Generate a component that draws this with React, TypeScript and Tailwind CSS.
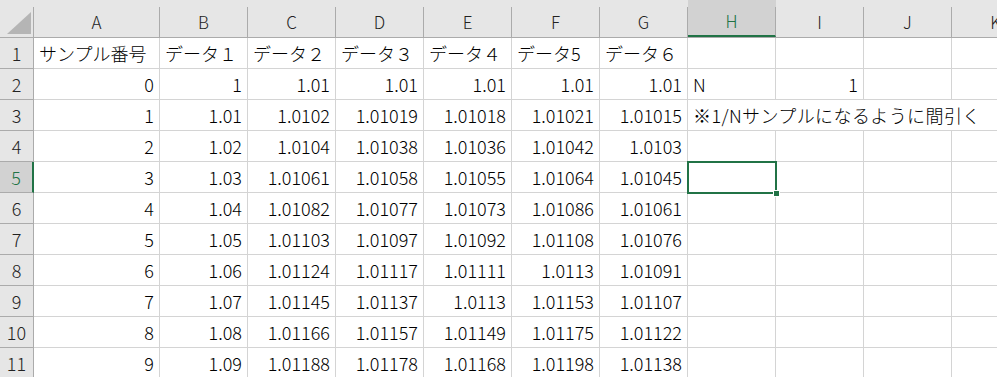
import React from 'react';

const cols = ['A', 'B', 'C', 'D', 'E', 'F', 'G', 'H', 'I', 'J', 'K'];
const widths = ['w-[126px]', 'w-[88px]', 'w-[88px]', 'w-[88px]', 'w-[88px]', 'w-[88px]', 'w-[88px]', 'w-[88px]', 'w-[88px]', 'w-[88px]', 'w-[88px]'];

type Cell = { v: string; left?: boolean };

const head = ['サンプル番号', 'データ１', 'データ２', 'データ３', 'データ４', 'データ5', 'データ６'];

const data: string[][] = [
  ['0', '1', '1.01', '1.01', '1.01', '1.01', '1.01'],
  ['1', '1.01', '1.0102', '1.01019', '1.01018', '1.01021', '1.01015'],
  ['2', '1.02', '1.0104', '1.01038', '1.01036', '1.01042', '1.0103'],
  ['3', '1.03', '1.01061', '1.01058', '1.01055', '1.01064', '1.01045'],
  ['4', '1.04', '1.01082', '1.01077', '1.01073', '1.01086', '1.01061'],
  ['5', '1.05', '1.01103', '1.01097', '1.01092', '1.01108', '1.01076'],
  ['6', '1.06', '1.01124', '1.01117', '1.01111', '1.0113', '1.01091'],
  ['7', '1.07', '1.01145', '1.01137', '1.0113', '1.01153', '1.01107'],
  ['8', '1.08', '1.01166', '1.01157', '1.01149', '1.01175', '1.01122'],
  ['9', '1.09', '1.01188', '1.01178', '1.01168', '1.01198', '1.01138'],
];

function buildRow(r: number): Cell[] {
  if (r === 1) return [...head.map((v) => ({ v, left: true })), { v: '' }, { v: '' }, { v: '' }, { v: '' }];
  const base: Cell[] = data[r - 2].map((v) => ({ v }));
  if (r === 2) return [...base, { v: 'N', left: true }, { v: '1' }, { v: '' }, { v: '' }];
  return [...base, { v: '' }, { v: '' }, { v: '' }, { v: '' }];
}

function RowHeader({ n }: { n: number }) {
  const sel = n === 5;
  return (
    <div
      className={`w-[34px] shrink-0 h-[31px] border-b border-[#ababab] flex items-center justify-center text-[18px] leading-none ${
        sel ? 'bg-[#d2d2d2] text-[#217346] border-r-2 border-r-[#217346]' : 'bg-[#e6e6e6] text-[#222] border-r border-r-[#ababab]'
      }`}
    >
      {n}
    </div>
  );
}

export default function App() {
  const rows = Array.from({ length: 11 }, (_, i) => i + 1);
  return (
    <div
      className="w-[997px] h-[377px] overflow-hidden bg-white text-black font-light"
      style={{ fontFamily: '"Noto Sans CJK JP", "Noto Sans", sans-serif' }}
    >
      {/* column headers */}
      <div className="flex h-[38px] bg-[#e6e6e6] border-b border-[#ababab]">
        <div className="w-[34px] shrink-0 pt-[7px]">
          <div className="h-full border-r border-[#ababab] relative">
            <svg width="25" height="23" viewBox="0 0 25 23" className="absolute left-[7px] top-[5px]">
              <polygon points="0,22 24,22 24,0" fill="#b5b5b5" />
            </svg>
          </div>
        </div>
        {cols.map((c, i) => {
          const sel = c === 'H';
          return (
            <div key={c} className={`${widths[i]} shrink-0 pt-[7px] ${sel ? 'bg-[#d2d2d2]' : ''}`}>
              <div
                className={`h-full border-r border-[#ababab] flex items-center justify-center text-[17px] ${
                  sel ? 'text-[#217346] border-b-2 border-b-[#217346]' : 'text-[#222]'
                }`}
              >
                {c}
              </div>
            </div>
          );
        })}
      </div>

      {rows.map((r) => {
        const cells = buildRow(r);
        return (
          <div key={r} className="flex">
            <RowHeader n={r} />
            {r === 3 ? (
              <>
                {cells.slice(0, 7).map((c, i) => (
                  <div
                    key={i}
                    className={`${widths[i]} shrink-0 h-[31px] border-b border-r border-[#d4d4d4] px-[5px] text-[18px] leading-[30px] whitespace-nowrap text-right`}
                  >
                    {c.v}
                  </div>
                ))}
                <div className="w-[352px] shrink-0 h-[31px] border-b border-[#d4d4d4] px-[5px] text-[18px] leading-[30px] whitespace-nowrap tracking-[0.4px]">
                  ※1/Nサンプルになるように間引く
                </div>
              </>
            ) : (
              cells.map((c, i) => (
                <div
                  key={i}
                  className={`${widths[i]} shrink-0 h-[31px] border-b border-r border-[#d4d4d4] px-[5px] text-[18px] leading-[30px] whitespace-nowrap relative ${
                    c.left ? 'text-left' : 'text-right'
                  }`}
                >
                  {c.v}
                  {r === 5 && cols[i] === 'H' && (
                    <div className="absolute -left-[1px] -top-[1px] w-[90px] h-[33px] border-2 border-[#217346] z-10">
                      <div className="absolute -right-[5px] -bottom-[5px] w-[7px] h-[7px] bg-[#217346] border border-white" />
                    </div>
                  )}
                </div>
              ))
            )}
          </div>
        );
      })}
    </div>
  );
}
